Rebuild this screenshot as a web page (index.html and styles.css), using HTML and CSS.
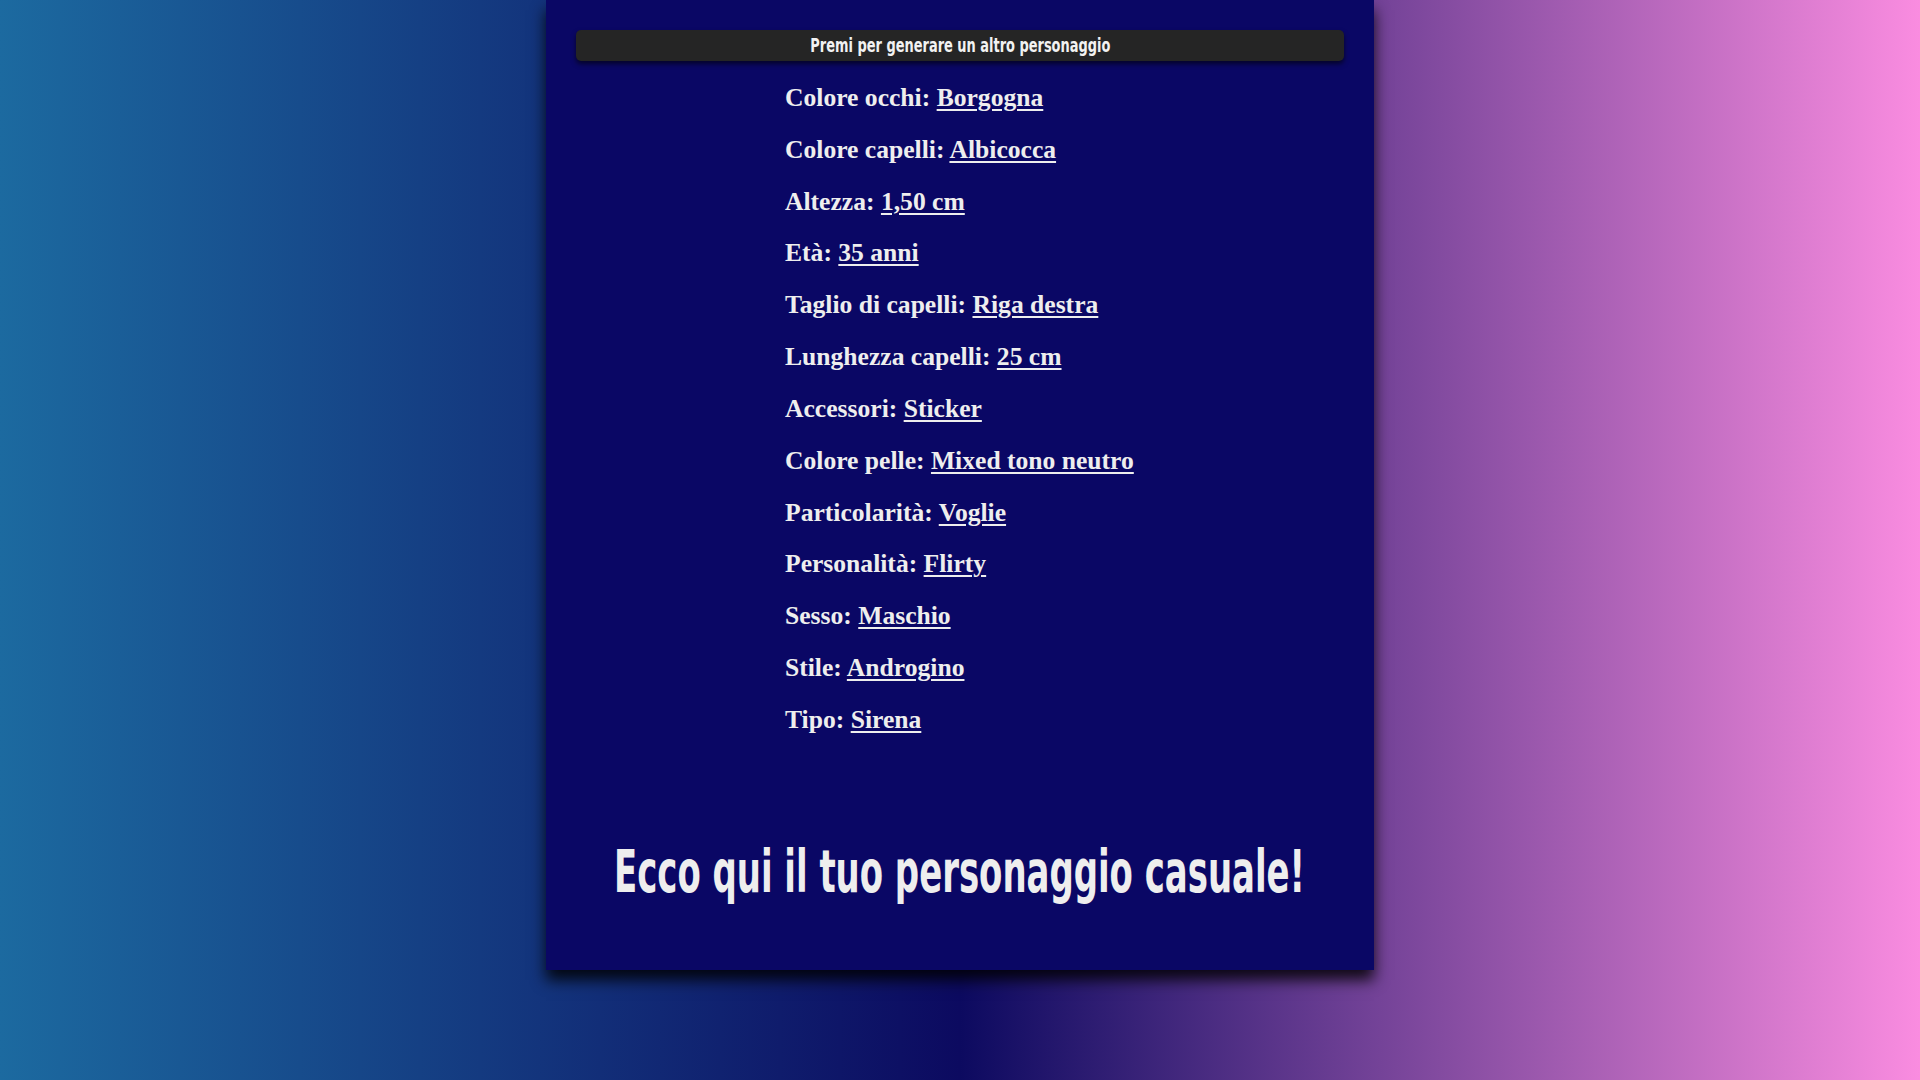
FILE: index.html
```html
<!DOCTYPE html>
<html lang="it">
<head>
<meta charset="utf-8">
<title>Personaggio casuale</title>
<link rel="stylesheet" href="styles.css">
</head>
<body>
<main class="card">
  <button class="gen-btn" type="button"><span>Premi per generare un altro personaggio</span></button>
  <ul class="traits">
    <li>Colore occhi: <a href="#">Borgogna</a></li>
    <li>Colore capelli: <a href="#">Albicocca</a></li>
    <li>Altezza: <a href="#">1,50 cm</a></li>
    <li>Età: <a href="#">35 anni</a></li>
    <li>Taglio di capelli: <a href="#">Riga destra</a></li>
    <li>Lunghezza capelli: <a href="#">25 cm</a></li>
    <li>Accessori: <a href="#">Sticker</a></li>
    <li>Colore pelle: <a href="#">Mixed tono neutro</a></li>
    <li>Particolarità: <a href="#">Voglie</a></li>
    <li>Personalità: <a href="#">Flirty</a></li>
    <li>Sesso: <a href="#">Maschio</a></li>
    <li>Stile: <a href="#">Androgino</a></li>
    <li>Tipo: <a href="#">Sirena</a></li>
  </ul>
  <h1 class="title"><span>Ecco qui il tuo personaggio casuale!</span></h1>
</main>
</body>
</html>
```

FILE: styles.css
```css
html, body {
  margin: 0;
  padding: 0;
  height: 100%;
}

body {
  background: linear-gradient(to right, #1c6aa0 0%, #0c0a60 50%, #fa8ce0 100%);
  color: #eeeeee;
  font-family: "Liberation Serif", "Times New Roman", serif;
  overflow: hidden;
}

.card {
  width: 828px;
  box-sizing: border-box;
  margin: 0 auto;
  background: #0a0765;
  padding: 30px 30px 59px;
  box-shadow: 0 10px 14px rgba(0, 0, 0, 0.85);
  display: flex;
  flex-direction: column;
}

.gen-btn {
  display: flex;
  justify-content: center;
  align-items: center;
  width: 100%;
  height: 31px;
  padding: 0;
  border: none;
  border-radius: 5px;
  background: #252525;
  color: #f2f2f2;
  font-family: "DejaVu Sans Condensed", "DejaVu Sans", sans-serif;
  font-stretch: condensed;
  font-weight: 700;
  font-size: 20px;
  line-height: 31px;
  box-shadow: 0 3px 5px rgba(0, 0, 0, 0.6);
  cursor: pointer;
  overflow: visible;
}

.gen-btn span {
  display: inline-block;
  white-space: nowrap;
  transform: scaleX(0.72);
}

.traits {
  list-style: none;
  margin: 12px auto 0;
  padding: 0;
  width: 350px;
  display: flex;
  flex-direction: column;
}

.traits li {
  height: 51.84px;
  line-height: 50px;
  font-size: 25.6px;
  font-weight: 700;
  white-space: nowrap;
}

.traits a {
  color: #eeeeee;
  text-decoration: underline;
  text-decoration-thickness: 2px;
  text-underline-offset: 3px;
}

.title {
  margin: 86px 0 0;
  height: 78px;
  display: flex;
  justify-content: center;
  align-items: center;
  font-family: "DejaVu Sans Condensed", "DejaVu Sans", sans-serif;
  font-stretch: condensed;
  font-weight: 700;
  font-size: 58px;
  line-height: 78px;
  color: #eeeeee;
  white-space: nowrap;
}

.title span {
  display: inline-block;
  flex: none;
  transform: scaleX(0.65);
}
```
